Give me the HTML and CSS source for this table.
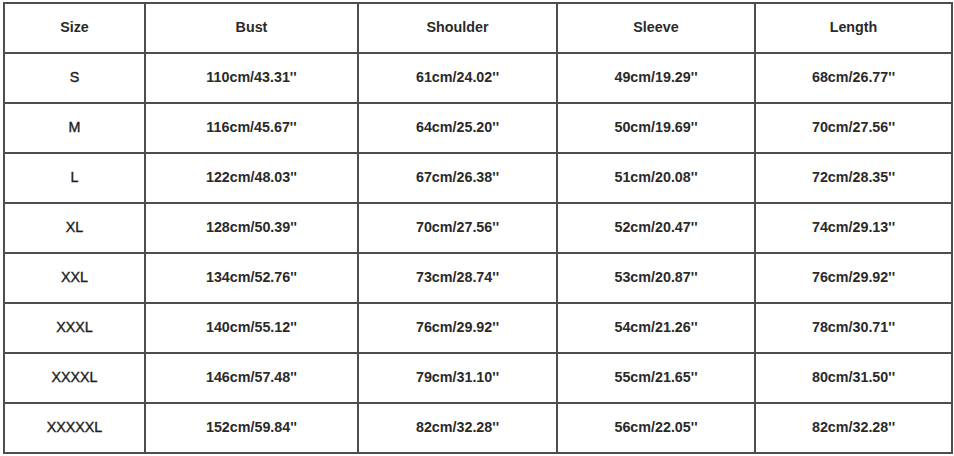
FILE: index.html
```html
<!DOCTYPE html>
<html>
<head>
<meta charset="utf-8">
<link rel="stylesheet" href="styles.css">
</head>
<body>
<div class="chart">
  <div class="cell head">Size</div><div class="cell head">Bust</div><div class="cell head">Shoulder</div><div class="cell head">Sleeve</div><div class="cell head">Length</div>
  <div class="cell size">S</div><div class="cell">110cm/43.31''</div><div class="cell">61cm/24.02''</div><div class="cell">49cm/19.29''</div><div class="cell">68cm/26.77''</div>
  <div class="cell size">M</div><div class="cell">116cm/45.67''</div><div class="cell">64cm/25.20''</div><div class="cell">50cm/19.69''</div><div class="cell">70cm/27.56''</div>
  <div class="cell size">L</div><div class="cell">122cm/48.03''</div><div class="cell">67cm/26.38''</div><div class="cell">51cm/20.08''</div><div class="cell">72cm/28.35''</div>
  <div class="cell size">XL</div><div class="cell">128cm/50.39''</div><div class="cell">70cm/27.56''</div><div class="cell">52cm/20.47''</div><div class="cell">74cm/29.13''</div>
  <div class="cell size">XXL</div><div class="cell">134cm/52.76''</div><div class="cell">73cm/28.74''</div><div class="cell">53cm/20.87''</div><div class="cell">76cm/29.92''</div>
  <div class="cell size">XXXL</div><div class="cell">140cm/55.12''</div><div class="cell">76cm/29.92''</div><div class="cell">54cm/21.26''</div><div class="cell">78cm/30.71''</div>
  <div class="cell size">XXXXL</div><div class="cell">146cm/57.48''</div><div class="cell">79cm/31.10''</div><div class="cell">55cm/21.65''</div><div class="cell">80cm/31.50''</div>
  <div class="cell size">XXXXXL</div><div class="cell">152cm/59.84''</div><div class="cell">82cm/32.28''</div><div class="cell">56cm/22.05''</div><div class="cell">82cm/32.28''</div>
</div>
</body>
</html>
```
FILE: styles.css
```css
html, body {
  margin: 0;
  padding: 0;
  background: #ffffff;
}
.chart {
  margin: 2px 0 0 3px;
  width: 946px;
  display: grid;
  grid-template-columns: 139px 211px 197px 196px 195px;
  grid-auto-rows: 48px;
  gap: 2px;
  padding: 2px;
  background: #4d4d4d;
  font-family: "Liberation Sans", Arial, sans-serif;
  font-size: 14.3px;
  font-weight: bold;
  color: #2a2a2a;
}
.cell {
  background: #ffffff;
  display: flex;
  align-items: center;
  justify-content: center;
  padding-bottom: 2px;
}
.cell.size {
  font-weight: normal;
  color: #1e1e1e;
  -webkit-text-stroke: 0.4px #1e1e1e;
}
.cell.head {
  font-weight: bold;
}
```
